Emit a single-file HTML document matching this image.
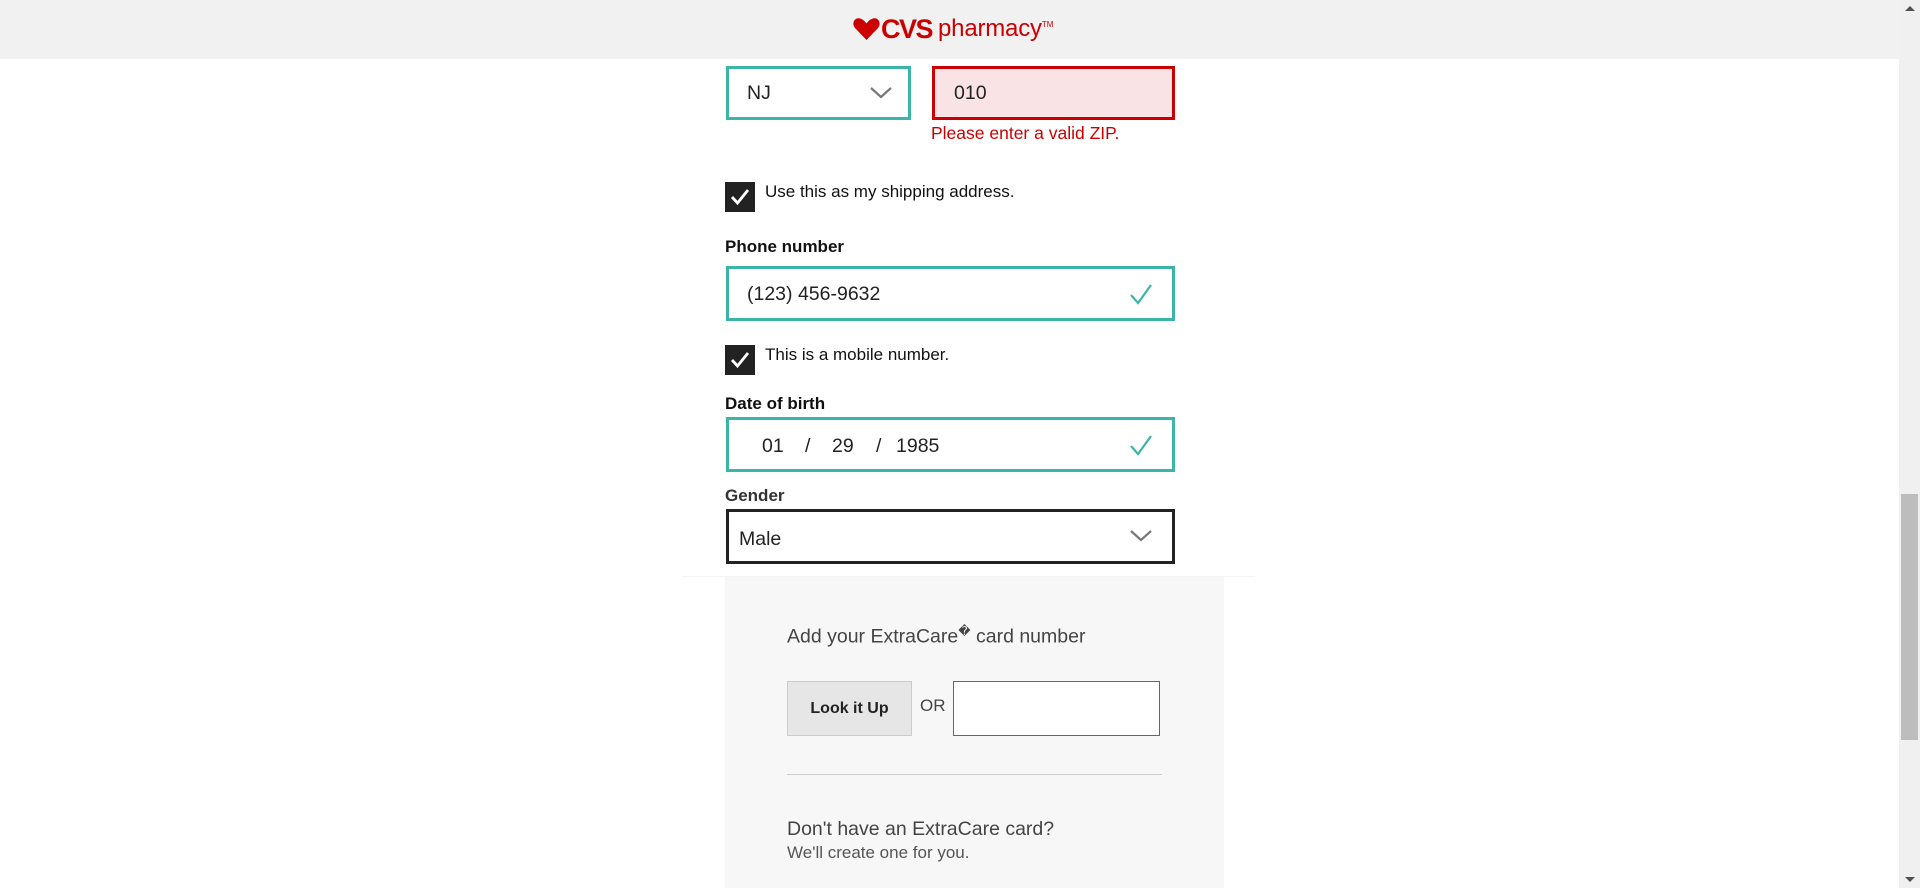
<!DOCTYPE html>
<html><head><meta charset="utf-8"><style>
*{box-sizing:border-box;margin:0;padding:0}
body{width:1920px;height:888px;overflow:hidden;background:#fff;font-family:"Liberation Sans",Arial,sans-serif;position:relative;color:#222}
.a{position:absolute}
.hdr{left:0;top:0;width:1899px;height:59px;background:#f1f1f1}
.box{border:3px solid #3ab5a7;background:#fff}
.t{font-size:19.5px;color:#222;white-space:nowrap}
.cb{width:30px;height:30px;background:#222}
.lbl{font-size:17px;font-weight:bold;color:#111}
.ck{font-size:17px;color:#111}
.sb{left:1899px;top:0;width:21px;height:888px;background:#f0f0f0}
</style></head><body>
<div class="a hdr"></div>
<div class="a" style="left:853px;top:14px;height:30px;display:flex;align-items:center;white-space:nowrap">
<svg width="27" height="22" viewBox="0 0 27 22"><path d="M13.5 22 L2 10 C-2 5 2 -1 7 0.5 C10 1.3 12 3.5 13.5 5.5 C15 3.5 17 1.3 20 0.5 C25 -1 29 5 25 10 Z" fill="#cc0000"/></svg>
<span style="font-size:27px;font-weight:bold;color:#cc0000;letter-spacing:-1.5px;margin-left:1px">CVS</span>
<span style="font-size:24px;color:#cc0000;margin-left:6px;letter-spacing:-0.2px">pharmacy</span><span style="font-size:8px;color:#cc0000;align-self:flex-start;margin-top:6px">TM</span>
</div>

<div class="a box" style="left:726px;top:66px;width:185px;height:54px"></div>
<div class="a t" style="left:747px;top:82px">NJ</div>
<svg class="a" style="left:870px;top:87px" width="22" height="12"><path d="M1 1 L11 10 L21 1" stroke="#777" stroke-width="2.2" fill="none"/></svg>

<div class="a" style="left:932px;top:66px;width:243px;height:54px;border:3px solid #cc0000;background:#fae3e4"></div>
<div class="a t" style="left:954px;top:82px">010</div>
<div class="a" style="left:931px;top:123px;font-size:17.5px;color:#cc0000">Please enter a valid ZIP.</div>

<div class="a cb" style="left:725px;top:182px"></div>
<svg class="a" style="left:730px;top:188px" width="20" height="18"><path d="M2 9 L7.5 15 L18 2" stroke="#fff" stroke-width="2.8" fill="none"/></svg>
<div class="a ck" style="left:765px;top:182px">Use this as my shipping address.</div>

<div class="a lbl" style="left:725px;top:237px">Phone number</div>
<div class="a box" style="left:726px;top:266px;width:449px;height:55px"></div>
<div class="a t" style="left:747px;top:283px">(123) 456-9632</div>
<svg class="a" style="left:1129px;top:283px" width="24" height="22"><path d="M2 12 L9 20 L22 2" stroke="#3ab5a7" stroke-width="2.2" fill="none"/></svg>

<div class="a cb" style="left:725px;top:345px"></div>
<svg class="a" style="left:730px;top:351px" width="20" height="18"><path d="M2 9 L7.5 15 L18 2" stroke="#fff" stroke-width="2.8" fill="none"/></svg>
<div class="a ck" style="left:765px;top:345px">This is a mobile number.</div>

<div class="a lbl" style="left:725px;top:394px">Date of birth</div>
<div class="a box" style="left:726px;top:417px;width:449px;height:55px"></div>
<div class="a t" style="left:762px;top:435px">01</div>
<div class="a t" style="left:805px;top:435px">/</div>
<div class="a t" style="left:832px;top:435px">29</div>
<div class="a t" style="left:876px;top:435px">/</div>
<div class="a t" style="left:896px;top:435px">1985</div>
<svg class="a" style="left:1129px;top:434px" width="24" height="22"><path d="M2 12 L9 20 L22 2" stroke="#3ab5a7" stroke-width="2.2" fill="none"/></svg>

<div class="a lbl" style="left:725px;top:486px;color:#333">Gender</div>
<div class="a" style="left:726px;top:509px;width:449px;height:55px;border:3px solid #222;background:#fff"></div>
<div class="a t" style="left:739px;top:528px">Male</div>
<svg class="a" style="left:1130px;top:530px" width="22" height="12"><path d="M1 1 L11 10 L21 1" stroke="#777" stroke-width="2.2" fill="none"/></svg>

<div class="a" style="left:682px;top:576px;width:573px;height:1px;background:#f4f4f4"></div>
<div class="a" style="left:725px;top:577px;width:499px;height:311px;background:#f7f7f7"></div>
<div class="a" style="left:787px;top:624px;font-size:19.5px;color:#444">Add your ExtraCare<sup style="font-size:12px">�</sup> card number</div>
<div class="a" style="left:787px;top:681px;width:125px;height:55px;background:#e6e6e6;border:1px solid #ccc;font-size:16px;font-weight:bold;color:#222;text-align:center;line-height:53px">Look it Up</div>
<div class="a" style="left:920px;top:696px;font-size:17px;color:#444">OR</div>
<div class="a" style="left:953px;top:681px;width:207px;height:55px;background:#fff;border:1px solid #666"></div>
<div class="a" style="left:787px;top:774px;width:375px;height:1px;background:#ccc"></div>
<div class="a" style="left:787px;top:818px;font-size:19.5px;color:#444">Don't have an ExtraCare card?</div>
<div class="a" style="left:787px;top:843px;font-size:17px;color:#555">We'll create one for you.</div>

<div class="a sb"></div>
<div class="a" style="left:1901px;top:494px;width:17px;height:246px;background:#bdbdbd"></div>
<svg class="a" style="left:1903px;top:4px" width="14" height="8"><path d="M2 7 L7 2 L12 7Z" fill="#505050"/></svg>
<svg class="a" style="left:1903px;top:876px" width="14" height="8"><path d="M2 1 L7 6 L12 1Z" fill="#505050"/></svg>
</body></html>
